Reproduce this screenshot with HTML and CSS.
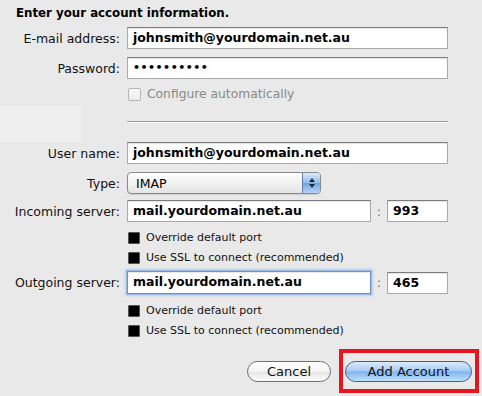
FILE: index.html
```html
<!DOCTYPE html>
<html>
<head>
<meta charset="utf-8">
<link rel="stylesheet" href="styles.css">
</head>
<body>
<div class="sheet">
  <div class="ghost-panel"></div>
  <h1 class="title">Enter your account information.</h1>

  <div class="row r-email">
    <label class="lbl">E-mail address:</label>
    <div class="field wide">johnsmith@yourdomain.net.au</div>
  </div>
  <div class="row r-pass">
    <label class="lbl">Password:</label>
    <div class="field wide dots">••••••••••</div>
  </div>
  <div class="row r-auto">
    <span class="lbl"></span>
    <div class="check disabled"><span class="box"></span><span>Configure automatically</span></div>
  </div>
  <div class="row r-sep">
    <span class="lbl"></span>
    <div class="sep"></div>
  </div>

  <div class="row r-user">
    <label class="lbl">User name:</label>
    <div class="field wide">johnsmith@yourdomain.net.au</div>
  </div>
  <div class="row r-type">
    <label class="lbl">Type:</label>
    <div class="select"><span class="sel-text">IMAP</span><span class="stepper"><svg width="8" height="12" viewBox="0 0 8 12"><path d="M4 1 L7 5 L1 5 Z" fill="#1a2a44"/><path d="M4 11 L7 7 L1 7 Z" fill="#1a2a44"/></svg></span></div>
  </div>
  <div class="row r-in">
    <label class="lbl">Incoming server:</label>
    <div class="server">
      <div class="field host">mail.yourdomain.net.au</div>
      <span class="colon">:</span>
      <div class="field port">993</div>
    </div>
  </div>
  <div class="row r-c1">
    <span class="lbl"></span>
    <div class="check"><span class="box on"></span><span>Override default port</span></div>
  </div>
  <div class="row r-c2">
    <span class="lbl"></span>
    <div class="check"><span class="box on"></span><span>Use SSL to connect (recommended)</span></div>
  </div>
  <div class="row r-out">
    <label class="lbl">Outgoing server:</label>
    <div class="server">
      <div class="field host focus">mail.yourdomain.net.au</div>
      <span class="colon">:</span>
      <div class="field port">465</div>
    </div>
  </div>
  <div class="row r-c3">
    <span class="lbl"></span>
    <div class="check"><span class="box on"></span><span>Override default port</span></div>
  </div>
  <div class="row r-c4">
    <span class="lbl"></span>
    <div class="check"><span class="box on"></span><span>Use SSL to connect (recommended)</span></div>
  </div>

  <div class="buttons">
    <button class="btn cancel">Cancel</button>
    <div class="highlight">
      <button class="btn primary">Add Account</button>
    </div>
  </div>
</div>
</body>
</html>
```

FILE: styles.css
```css
html, body {
  margin: 0;
  padding: 0;
}
body {
  width: 482px;
  height: 396px;
  overflow: hidden;
  background: #e9e9e9;
  font-family: "DejaVu Sans", Verdana, sans-serif;
  color: #000;
}
.sheet {
  position: relative;
  padding: 6px 0 0 0;
}
.ghost-panel {
  position: absolute;
  left: 0;
  top: 106px;
  width: 82px;
  height: 36px;
  background: #eeeeee;
}
.title {
  position: relative;
  margin: 0 0 6px 16px;
  font-size: 11.8px;
  font-weight: bold;
  line-height: 15px;
}
.row {
  position: relative;
  display: grid;
  grid-template-columns: 120px auto;
  column-gap: 7px;
  align-items: center;
}
.lbl {
  text-align: right;
  font-size: 12.5px;
  color: #111;
  white-space: nowrap;
}
.field {
  box-sizing: border-box;
  height: 22px;
  background: #fff;
  border: 1px solid #a9a9a9;
  border-top-color: #7c7c7c;
  box-shadow: inset 0 1px 1px rgba(0,0,0,0.12);
  font-size: 12.5px;
  font-weight: bold;
  line-height: 20px;
  padding-left: 5px;
  white-space: nowrap;
  overflow: hidden;
}
.wide { width: 321px; }
.dots { font-size: 11px; letter-spacing: 0.5px; }
.r-pass { margin-top: 8px; }
.r-auto { margin-top: 7px; }
.r-sep { margin-top: 19px; }
.sep {
  width: 321px;
  height: 0;
  border-top: 1px solid #9a9a9a;
  border-bottom: 1px solid #f8f8f8;
}
.r-user { margin-top: 19px; }
.r-type { margin-top: 8px; }
.r-in { margin-top: 6px; }
.r-c1 { margin-top: 9px; }
.r-c2 { margin-top: 7px; }
.r-out { margin-top: 7px; }
.r-c3 { margin-top: 10px; }
.r-c4 { margin-top: 7px; }

.check {
  display: flex;
  align-items: center;
  gap: 6px;
  font-size: 11px;
  height: 13px;
  color: #111;
  padding-left: 1px;
}
.check .box {
  box-sizing: border-box;
  width: 12px;
  height: 12px;
  border: 1px solid #555;
  background: #000;
  border-radius: 1px;
}
.check.disabled {
  font-size: 12.3px;
  color: #8a8a8a;
  height: 16px;
}
.check.disabled .box {
  width: 13px;
  height: 13px;
  border: 1px solid #b4b4b4;
  background: linear-gradient(#fafafa, #ececec);
  border-radius: 2px;
}
.select {
  box-sizing: border-box;
  width: 194px;
  height: 22px;
  border: 1px solid #8a8a8a;
  border-radius: 4px;
  background: linear-gradient(#ffffff, #f0f0f0 55%, #e4e4e4);
  display: flex;
  align-items: center;
  justify-content: space-between;
  overflow: hidden;
  box-shadow: 0 1px 1px rgba(0,0,0,0.12);
}
.sel-text {
  font-size: 12.5px;
  padding-left: 8px;
}
.stepper {
  width: 17px;
  height: 20px;
  border-left: 1px solid #5d7fae;
  background: linear-gradient(#dbe9fa, #94bde9 50%, #6fa4de 51%, #b5d3f3);
  display: flex;
  align-items: center;
  justify-content: center;
}
.server {
  display: flex;
  align-items: center;
}
.host { width: 244px; }
.colon {
  width: 16px;
  text-align: center;
  color: #777;
  font-size: 13px;
}
.port { width: 61px; }
.focus {
  height: 23px;
  border: 1px solid #6f8fbc;
  box-shadow: 0 0 0 1px #9dbde6, 0 0 2px 2px #b6cfee, inset 0 1px 1px rgba(0,0,0,0.1);
}
.buttons {
  position: relative;
  display: flex;
  justify-content: flex-end;
  align-items: center;
  gap: 8px;
  margin-top: 12px;
  padding-right: 3px;
}
.btn {
  font-family: "DejaVu Sans", Verdana, sans-serif;
  font-size: 13px;
  height: 21px;
  border-radius: 11px;
  padding: 0;
  color: #111;
  line-height: 19px;
}
.cancel {
  width: 84px;
  border: 1px solid #6e6e6e;
  background: linear-gradient(#ffffff, #f4f4f4 50%, #e6e6e6 51%, #fbfbfb);
}
.primary {
  width: 127px;
  border: 1px solid #3f5f8f;
  background: linear-gradient(#dcebfb, #a9cdf3 45%, #7db4ee 52%, #c3e1fb);
}
.highlight {
  border: 4px solid #e6151f;
  padding: 8px 3px 7px 2px;
  display: flex;
}
```
